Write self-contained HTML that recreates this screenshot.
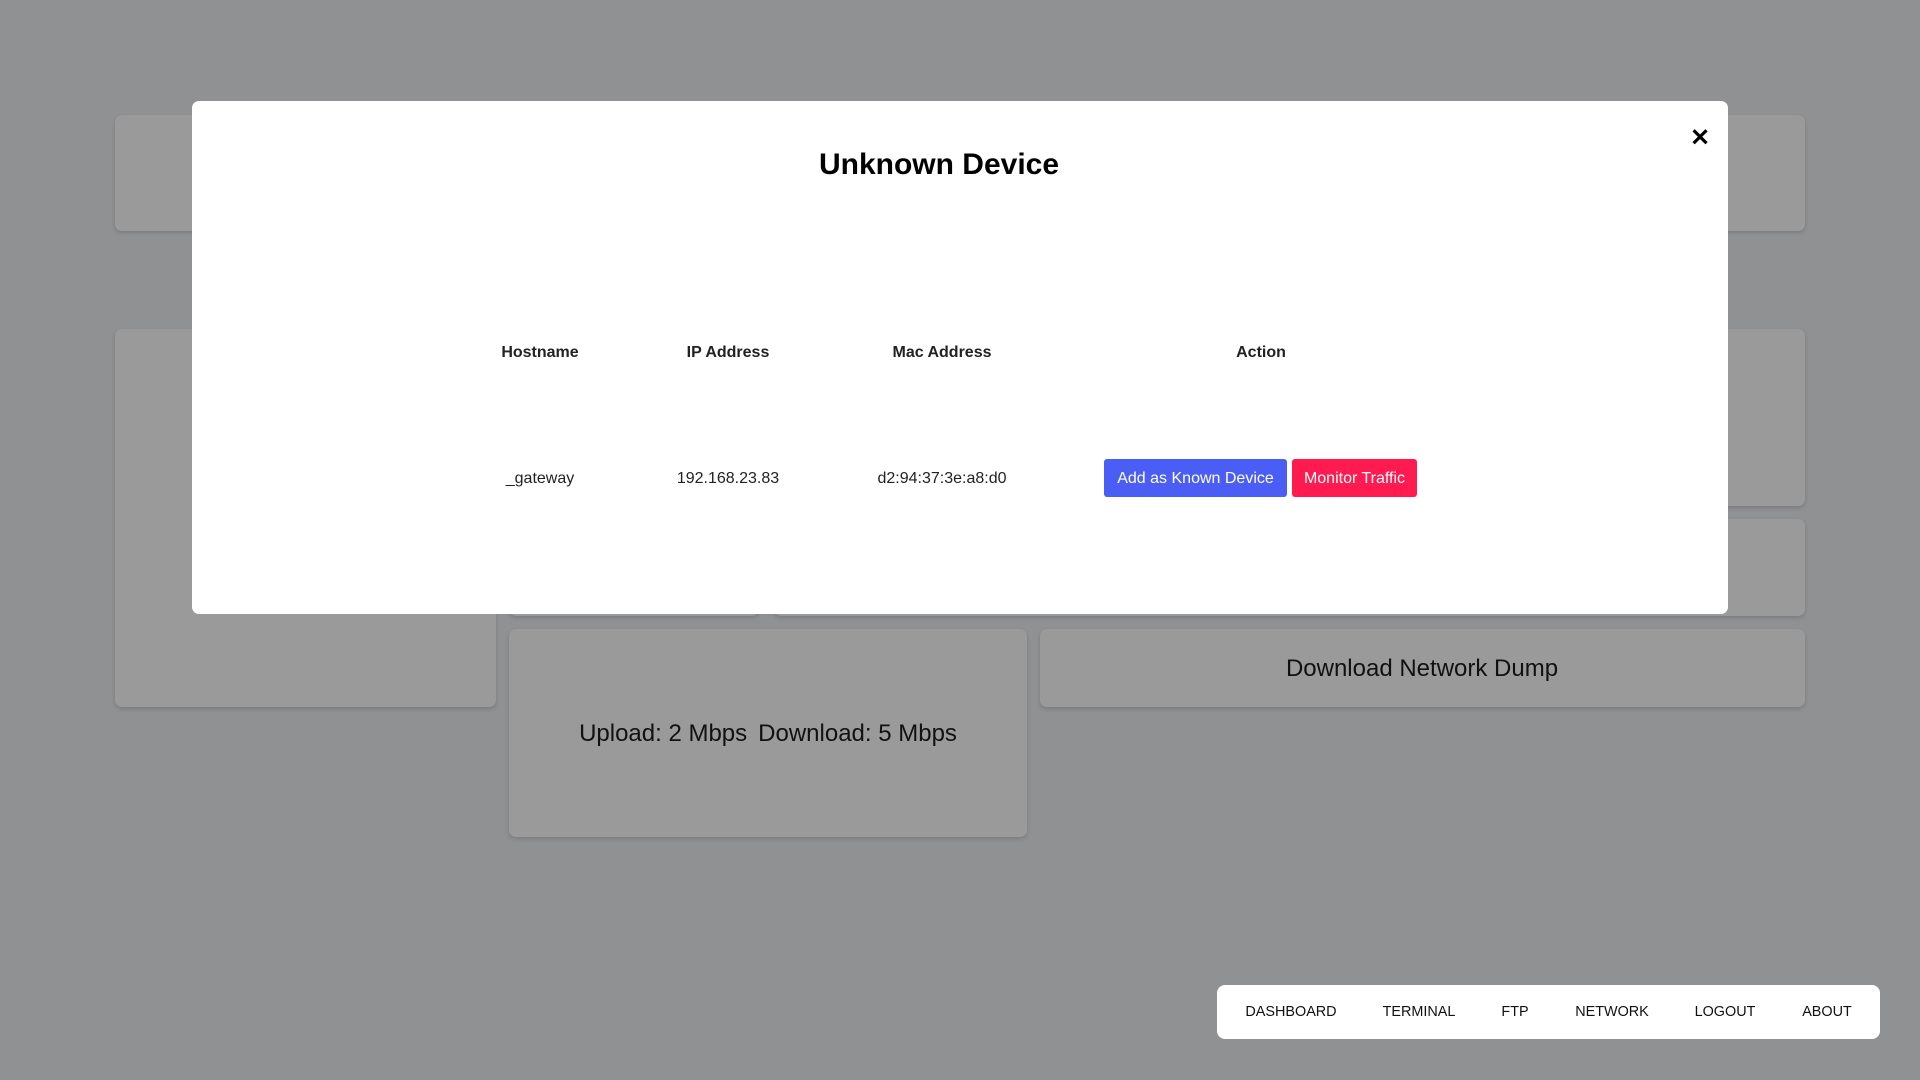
<!DOCTYPE html>
<html><head><style>
body{margin:0;width:1920px;height:1080px;background:#909193;font-family:"Liberation Sans",Arial,sans-serif;position:relative;overflow:hidden}
.c{position:absolute;background:#9a9a9a;border-radius:7px;box-shadow:0 2px 4px rgba(0,0,0,.15)}
.t{position:absolute;transform:translate(-50%,-50%);white-space:nowrap}
.modal{position:absolute;left:192px;top:101px;width:1536px;height:513px;background:#fff;border-radius:7px}
.btn{position:absolute;color:#fff;font-size:16px;display:flex;align-items:center;justify-content:center;border-radius:3px}
.nav{position:absolute;left:1217px;top:985px;width:663px;height:54px;background:#fff;border-radius:8px;font-size:14.4px;color:#111}
.nav span{position:absolute;top:50%;transform:translate(-50%,-50%)}
</style></head><body>
<div class="c" style="left:115px;top:115px;width:1690px;height:116px"></div>
<div class="c" style="left:115px;top:329px;width:381px;height:378px"></div>
<div class="c" style="left:774px;top:329px;width:1031px;height:177px"></div>
<div class="c" style="left:774px;top:519px;width:1031px;height:97px"></div>
<div class="c" style="left:509px;top:519px;width:250px;height:97px"></div>
<div class="c" style="left:509px;top:629px;width:518px;height:208px"></div>
<div class="c" style="left:1040px;top:629px;width:765px;height:78px"></div>
<div class="t" style="left:768px;top:734px;font-size:24px;color:#111"><span>Upload: 2 Mbps</span><span style="margin-left:11px">Download: 5 Mbps</span></div>
<div class="t" style="left:1422px;top:669px;font-size:24px;color:#111">Download Network Dump</div>
<div class="modal"></div>
<div class="t" style="left:939px;top:165px;font-size:30px;font-weight:bold;color:#000">Unknown Device</div>
<div class="t" style="left:1700px;top:138px;font-size:24px;font-weight:bold;color:#000">✕</div>
<div class="t" style="left:540px;top:353px;font-size:16px;font-weight:bold;color:#222">Hostname</div>
<div class="t" style="left:728px;top:353px;font-size:16px;font-weight:bold;color:#222">IP Address</div>
<div class="t" style="left:942px;top:353px;font-size:16px;font-weight:bold;color:#222">Mac Address</div>
<div class="t" style="left:1261px;top:353px;font-size:16px;font-weight:bold;color:#222">Action</div>
<div class="t" style="left:540px;top:479px;font-size:16px;color:#222">_gateway</div>
<div class="t" style="left:728px;top:479px;font-size:16px;color:#222">192.168.23.83</div>
<div class="t" style="left:942px;top:479px;font-size:16px;color:#222">d2:94:37:3e:a8:d0</div>
<div class="btn" style="left:1104px;top:459px;width:183px;height:38px;background:#4a5ef5;padding-top:1px;box-sizing:border-box">Add as Known Device</div>
<div class="btn" style="left:1292px;top:459px;width:125px;height:38px;background:#ff1a50;padding-top:1px;box-sizing:border-box">Monitor Traffic</div>
<div class="nav">
<span style="left:74px">DASHBOARD</span>
<span style="left:202px">TERMINAL</span>
<span style="left:298px">FTP</span>
<span style="left:395px">NETWORK</span>
<span style="left:508px">LOGOUT</span>
<span style="left:610px">ABOUT</span>
</div>
</body></html>
